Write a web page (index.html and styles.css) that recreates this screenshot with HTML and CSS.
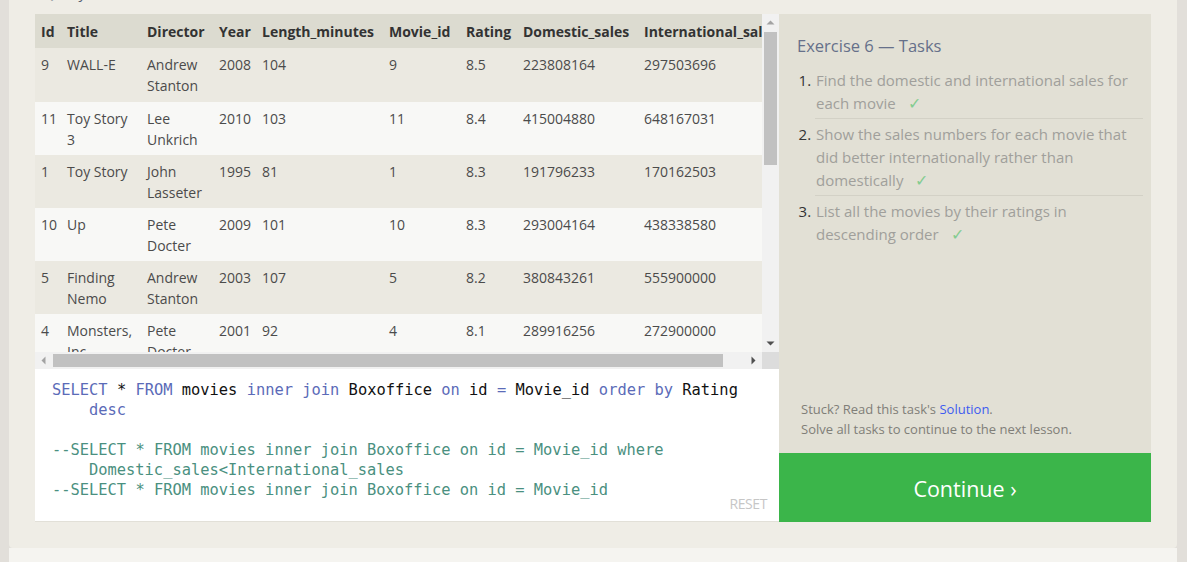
FILE: index.html
```html
<!DOCTYPE html>
<html>
<head>
<meta charset="utf-8">
<link rel="stylesheet" href="styles.css">
</head>
<body>
<div class="page">
  <main class="card">
    <div class="query-title">Query results</div>
    <div class="workspace">
      <section class="left">
        <div class="results">
          <div class="viewport">
            <table class="grid">
              <colgroup>
                <col class="c-id"><col class="c-title"><col class="c-dir"><col class="c-year"><col class="c-len"><col class="c-mid"><col class="c-rat"><col class="c-dom"><col class="c-int">
              </colgroup>
              <thead>
                <tr><th>Id</th><th>Title</th><th>Director</th><th>Year</th><th>Length_minutes</th><th>Movie_id</th><th>Rating</th><th>Domestic_sales</th><th>International_sales</th></tr>
              </thead>
              <tbody>
                <tr><td>9</td><td>WALL-E</td><td>Andrew Stanton</td><td>2008</td><td>104</td><td>9</td><td>8.5</td><td>223808164</td><td>297503696</td></tr>
                <tr><td>11</td><td>Toy Story 3</td><td>Lee Unkrich</td><td>2010</td><td>103</td><td>11</td><td>8.4</td><td>415004880</td><td>648167031</td></tr>
                <tr><td>1</td><td>Toy Story</td><td>John Lasseter</td><td>1995</td><td>81</td><td>1</td><td>8.3</td><td>191796233</td><td>170162503</td></tr>
                <tr><td>10</td><td>Up</td><td>Pete Docter</td><td>2009</td><td>101</td><td>10</td><td>8.3</td><td>293004164</td><td>438338580</td></tr>
                <tr><td>5</td><td>Finding Nemo</td><td>Andrew Stanton</td><td>2003</td><td>107</td><td>5</td><td>8.2</td><td>380843261</td><td>555900000</td></tr>
                <tr><td>4</td><td>Monsters, Inc.</td><td>Pete Docter</td><td>2001</td><td>92</td><td>4</td><td>8.1</td><td>289916256</td><td>272900000</td></tr>
                <tr><td>8</td><td>Ratatouille</td><td>Brad Bird</td><td>2007</td><td>115</td><td>8</td><td>8</td><td>206445654</td><td>417277164</td></tr>
                <tr><td>6</td><td>The Incredibles</td><td>Brad Bird</td><td>2004</td><td>116</td><td>6</td><td>8</td><td>261441092</td><td>370001000</td></tr>
                <tr><td>3</td><td>Toy Story 2</td><td>John Lasseter</td><td>1999</td><td>93</td><td>3</td><td>7.9</td><td>245852179</td><td>239163000</td></tr>
              </tbody>
            </table>
          </div>
          <div class="vbar">
            <div class="sb-btn"><svg width="17" height="17" viewBox="0 0 17 17"><path d="M4.5 10.5 L8.5 6.5 L12.5 10.5 Z" fill="#a3a3a3"/></svg></div>
            <div class="vtrack"><div class="vthumb"></div></div>
            <div class="sb-btn"><svg width="17" height="17" viewBox="0 0 17 17"><path d="M4.5 6.5 L8.5 10.5 L12.5 6.5 Z" fill="#505050"/></svg></div>
          </div>
          <div class="hbar">
            <div class="sb-btn"><svg width="17" height="17" viewBox="0 0 17 17"><path d="M10.5 4.5 L6.5 8.5 L10.5 12.5 Z" fill="#a3a3a3"/></svg></div>
            <div class="htrack"><div class="hthumb"></div></div>
            <div class="sb-btn"><svg width="17" height="17" viewBox="0 0 17 17"><path d="M6.5 4.5 L10.5 8.5 L6.5 12.5 Z" fill="#505050"/></svg></div>
          </div>
          <div class="corner"></div>
        </div>
        <div class="editor">
          <div class="code">
            <div class="ln"><span class="kw">SELECT</span> * <span class="kw">FROM</span> movies <span class="kw">inner</span> <span class="kw">join</span> Boxoffice <span class="kw">on</span> id <span class="kw">=</span> Movie_id <span class="kw">order</span> <span class="kw">by</span> Rating</div>
            <div class="ln wrap"><span class="kw">desc</span></div>
            <div class="ln">&nbsp;</div>
            <div class="ln cm">--SELECT * FROM movies inner join Boxoffice on id = Movie_id where</div>
            <div class="ln wrap cm">Domestic_sales&lt;International_sales</div>
            <div class="ln cm">--SELECT * FROM movies inner join Boxoffice on id = Movie_id</div>
          </div>
          <div class="reset">RESET</div>
        </div>
      </section>
      <aside class="right">
        <div class="tasks">
          <h2 class="tasks-title">Exercise 6 — Tasks</h2>
          <ol class="task-list">
            <li><span class="done">Find the domestic and international sales for each movie <span class="check">✓</span></span></li>
            <li><span class="done">Show the sales numbers for each movie that did better internationally rather than domestically <span class="check">✓</span></span></li>
            <li class="last"><span class="done">List all the movies by their ratings in descending order <span class="check">✓</span></span></li>
          </ol>
          <div class="hint">
            <p>Stuck? Read this task's <a class="link">Solution</a>.</p>
            <p>Solve all tasks to continue to the next lesson.</p>
          </div>
        </div>
        <div class="continue">Continue ›</div>
      </aside>
    </div>
  </main>
  <div class="below"></div>
</div>
</body>
</html>
```
FILE: styles.css
```css
* { box-sizing: border-box; }
html, body { margin: 0; padding: 0; }
body {
  background: #e2dfda;
  font-family: "Open Sans", "Noto Sans", sans-serif;
  height: 562px;
  overflow: hidden;
}
.page {
  margin-left: 9px;
  width: 1168px;
  display: flex;
  flex-direction: column;
  height: 562px;
}
.card {
  background: #efede6;
  padding: 0 26px 26px 26px;
  border-radius: 0 0 4px 4px;
}
.query-title {
  height: 18px;
  margin-top: -18px;
  font-size: 15px;
  line-height: 20px;
  color: #5a6375;
  padding-left: 8px;
}
.below {
  flex: 1;
  background: #f5f4f0;
}
.workspace {
  display: flex;
  margin-top: 14px;
}
.left {
  width: 744px;
  display: flex;
  flex-direction: column;
}
.right {
  width: 372px;
  display: flex;
  flex-direction: column;
}

/* results grid */
.results {
  display: grid;
  grid-template-columns: 727px 17px;
  grid-template-rows: 338px 17px;
}
.viewport {
  overflow: hidden;
  background: #f8f8f6;
}
.grid {
  border-collapse: collapse;
  table-layout: fixed;
  width: 753px;
  font-size: 14px;
  color: #4b4b4b;
}
.c-id { width: 26px; }
.c-title { width: 80px; }
.c-dir { width: 72px; }
.c-year { width: 43px; }
.c-len { width: 127px; }
.c-mid { width: 77px; }
.c-rat { width: 57px; }
.c-dom { width: 121px; }
.c-int { width: 150px; }
.grid th {
  background: #dcdbd0;
  color: #333;
  font-weight: 700;
  text-align: left;
  padding: 7px 0 6px 6px;
  line-height: 21px;
  white-space: nowrap;
  overflow: hidden;
}
.grid td {
  padding: 6px 6px 5px 6px;
  line-height: 21px;
  height: 53px;
  vertical-align: top;
}
.grid tbody tr:first-child td { height: 54px; }
.grid tbody tr:nth-child(odd) td { background: #ebe9e1; }
.grid tbody tr:nth-child(even) td { background: #f8f8f6; }

.vbar {
  background: #f1f1f1;
  display: flex;
  flex-direction: column;
}
.vtrack { flex: 1; padding: 1px 2px; }
.vthumb { width: 13px; height: 133px; background: #c1c1c1; }
.hbar {
  background: #f1f1f1;
  display: flex;
}
.htrack { flex: 1; padding: 2px 1px; }
.hthumb { height: 13px; width: 670px; background: #c1c1c1; }
.sb-btn { width: 17px; height: 17px; flex: none; }
.sb-btn svg { display: block; }
.corner { background: #dcdcdc; }

/* editor */
.editor {
  background: #fff;
  height: 153px;
  border-bottom: 1px solid #e2e0d8;
  padding: 11px 12px 0 17px;
  display: flex;
  flex-direction: column;
}
.code {
  font-family: "DejaVu Sans Mono", "Liberation Mono", monospace;
  font-size: 15.4px;
  line-height: 20px;
  color: #111;
  flex: none;
}
.ln { white-space: pre; height: 20px; }
.ln.wrap { padding-left: 37px; }
.kw { color: #5b6bb8; }
.cm { color: #4a9080; }
.reset {
  align-self: flex-end;
  margin-top: -5px;
  font-size: 14px;
  color: #c6c6c6;
  letter-spacing: -0.4px;
  line-height: 18px;
}

/* tasks */
.tasks {
  background: #e2e0d5;
  height: 439px;
  padding: 20px 8px 14px 18px;
  display: flex;
  flex-direction: column;
}
.tasks-title {
  margin: 0;
  font-weight: 400;
  font-size: 16.5px;
  line-height: 24px;
  color: #66708a;
}
.task-list {
  margin: 7px 0 0 0;
  padding-left: 18px;
  font-size: 15px;
  line-height: 23px;
  color: #333;
}
.task-list li {
  padding: 4px 0 3px 1px;
  border-bottom: 1px solid #d3d1c6;
}
.task-list li.last { border-bottom: 0; }
.done { color: #a09f9b; }
.check { color: #84cc90; margin-left: 8px; font-size: 16px; }
.hint {
  margin-top: auto;
  padding-left: 4px;
  font-size: 13px;
  line-height: 20px;
  color: #807e78;
}
.hint p { margin: 0; }
.link { color: #3d5bf0; }
.continue {
  height: 69px;
  background: #3bb54a;
  color: #fff;
  font-size: 21.5px;
  display: flex;
  align-items: center;
  justify-content: center;
  padding-top: 2px;
}
```
